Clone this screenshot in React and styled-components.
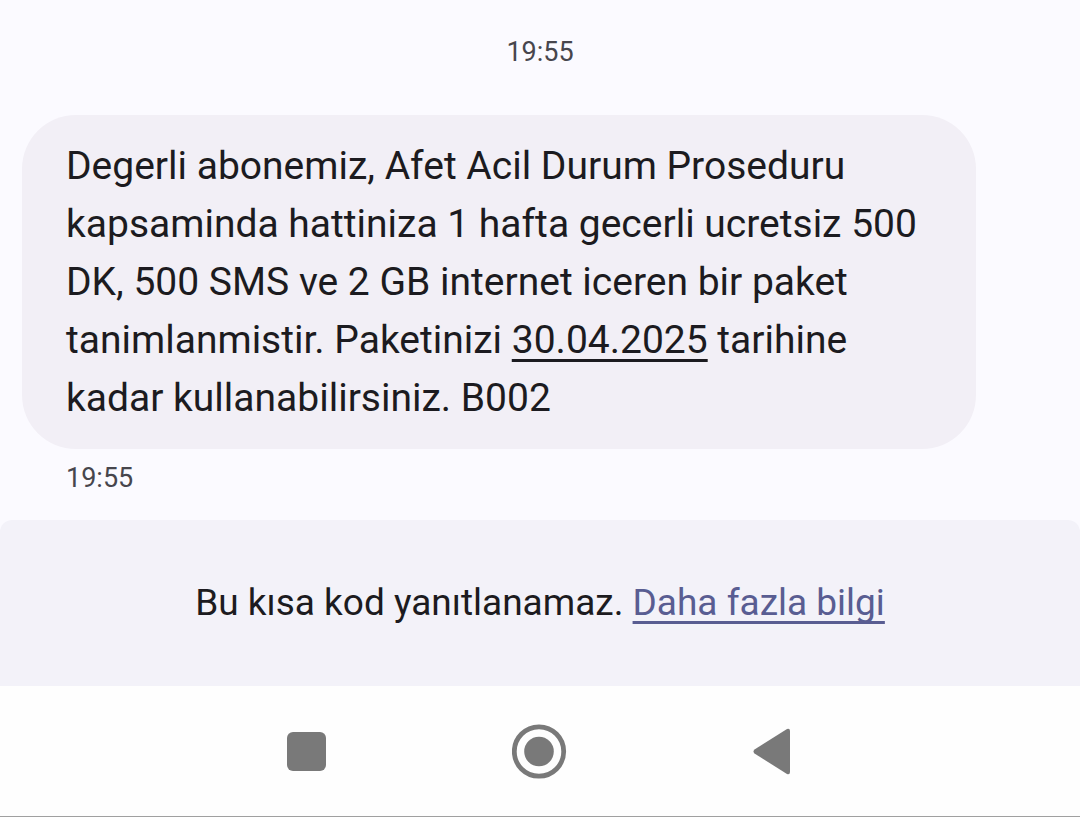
import React from 'react'
import styled, { createGlobalStyle } from 'styled-components'

const GlobalStyle = createGlobalStyle`
    *{
        box-sizing: border-box;
    }
    body{
        margin: 0;
        background-color: #fbfaff;
        font-family: Roboto, 'Noto Sans', sans-serif;
    }
`

function Message({ time, children }) {
    return (
        <MessageRow>
            <Bubble>{children}</Bubble>
            <MessageTime>{time}</MessageTime>
        </MessageRow>
    )
}

// Android bottom navigation
function NavigationBar() {
    return (
        <NavBar>
            <NavButton type="button" aria-label="Son uygulamalar">
                <svg width="56" height="56" viewBox="0 0 56 56">
                    <rect x="7" y="9" width="39" height="39" rx="6" fill="#797979" />
                </svg>
            </NavButton>
            <NavButton type="button" aria-label="Ana ekran">
                <svg width="56" height="56" viewBox="0 0 56 56">
                    <circle cx="27" cy="28.5" r="24.7" fill="none" stroke="#797979" strokeWidth="4.8" />
                    <circle cx="27" cy="28.5" r="14.8" fill="#797979" />
                </svg>
            </NavButton>
            <NavButton type="button" aria-label="Geri">
                <svg width="56" height="56" viewBox="0 0 56 56">
                    <path d="M46 8V49Q46 52 43 51L10.500 30.500Q8.500 28.500 10.500 26.500L43 6Q46 5 46 8Z" fill="#797979" />
                </svg>
            </NavButton>
        </NavBar>
    )
}

export default function App() {
    return (
        <Screen>
            <GlobalStyle />
            <Conversation>
                <DateHeader>19:55</DateHeader>
                <Message time="19:55">
                    Degerli abonemiz, Afet Acil Durum Proseduru<br />
                    kapsaminda hattiniza 1 hafta gecerli ucretsiz 500<br />
                    DK, 500 SMS ve 2 GB internet iceren bir paket<br />
                    tanimlanmistir. Paketinizi <DateLink href="#date">30.04.2025</DateLink> tarihine<br />
                    kadar kullanabilirsiniz. B002
                </Message>
            </Conversation>
            <Notice>
                Bu kısa kod yanıtlanamaz. <InfoLink href="#info">Daha fazla bilgi</InfoLink>
            </Notice>
            <NavigationBar />
        </Screen>
    )
}

const Screen = styled.div`
    display: flex;
    flex-direction: column;
    min-height: 100vh;
    color: #1c1b20;
`
const Conversation = styled.main`
    display: flex;
    flex-direction: column;
    flex: 1;
    padding: 33px 22px 19px;
`
const DateHeader = styled.time`
    align-self: center;
    margin-bottom: 44px;
    color: #47464d;
    font-size: 27px;
    line-height: 38px;
`
const MessageRow = styled.div`
    display: flex;
    flex-direction: column;
    align-items: flex-start;
`
const Bubble = styled.p`
    width: 100%;
    max-width: 954px;
    margin: 0;
    padding: 22px 44px;
    border-radius: 54px;
    background-color: #f2eff6;
    font-size: 39px;
    line-height: 58px;
`
const MessageTime = styled.time`
    margin: 10px 44px 0;
    color: #47464d;
    font-size: 27px;
    line-height: 38px;
`
const DateLink = styled.a`
    color: inherit;
    text-decoration-thickness: 3px;
    text-underline-offset: 6px;
    text-decoration-skip-ink: none;
`
const Notice = styled.footer`
    padding: 54px 24px;
    border-radius: 12px 12px 0 0;
    background-color: #f3f2f9;
    font-size: 37px;
    line-height: 58px;
    text-align: center;
`
const InfoLink = styled(DateLink)`
    color: #595d92;
`
const NavBar = styled.nav`
    display: flex;
    justify-content: center;
    align-items: center;
    gap: 176px;
    height: 131px;
    border-bottom: 1px solid #a0a0a0;
    background-color: #fefefe;
`
const NavButton = styled.button`
    display: flex;
    padding: 0;
    border: 0;
    background: none;
    cursor: pointer;
`
